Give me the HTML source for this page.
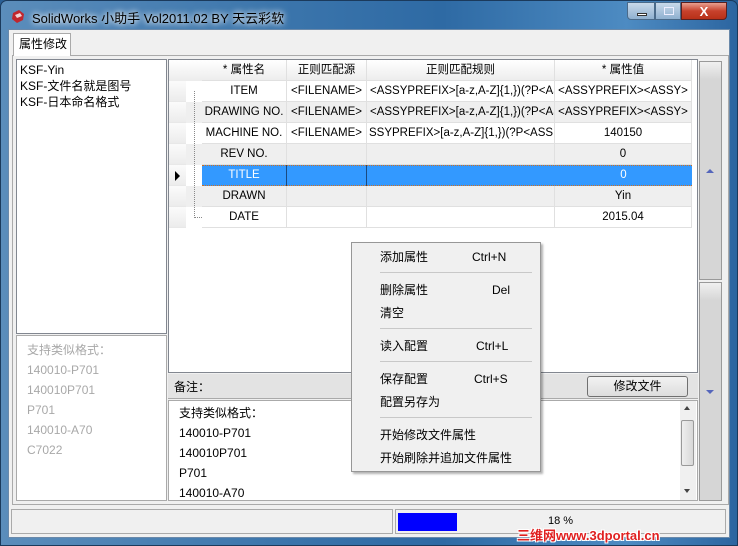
<!DOCTYPE html>
<html><head><meta charset="utf-8"><style>
*{margin:0;padding:0;box-sizing:border-box}
body{width:738px;height:546px;overflow:hidden;background:#2a5f95;font-family:"Liberation Sans","Noto Sans CJK SC",sans-serif;font-size:12px;color:#000;position:relative}
.a{position:absolute}
.win{left:0;top:0;width:738px;height:546px;border-radius:7px 7px 0 0;background:linear-gradient(90deg,#5b8dbb 0%,#3a74ab 40%,#2e6aa4 60%,#4d8bc2 85%,#2c65a0 100%);border:1px solid #1b3a5c}
.client{left:8px;top:29px;width:722px;height:509px;background:#f0f0f0;border:1px solid #6a89aa}
.t{white-space:nowrap}
.cell{position:absolute;height:21px;line-height:21px;text-align:center;white-space:nowrap;overflow:hidden;border-right:1px solid #e0e0e0;border-bottom:1px solid #e0e0e0;font-size:11.5px}
.rh{position:absolute;left:169px;width:17px;height:21px;background:linear-gradient(#fbfbfb,#ececec);border-bottom:1px solid #e8e8e8}
.menu div{position:absolute;left:28px;font-size:12px;white-space:nowrap;line-height:16px;height:16px}
.sep{position:absolute;left:22px;width:152px;height:1px !important;background:#c8c8c8}
</style></head><body>
<div class="a win"></div>
<svg class="a" style="left:10px;top:8px" width="16" height="16"><path d="M3 5 L9 2 L14 6 L13 12 L7 15 L2 11Z" fill="#c0262d"/><path d="M5 7 L10 5 L12 8 L7 10Z" fill="#fff" opacity=".8"/></svg>
<div class="a t" style="left:32px;top:8px;font-size:13px;color:#000;text-shadow:0 0 8px #fff,0 0 6px #fff">SolidWorks 小助手 Vol2011.02 BY 天云彩软</div>
<div class="a" style="left:627px;top:2px;width:28px;height:18px;border:1px solid #4a6a8a;border-radius:0 0 0 4px;background:linear-gradient(#c9d9ea,#8fb0d0)"><div class="a" style="left:9px;top:10px;width:10px;height:3px;background:#fff;border:1px solid #333"></div></div>
<div class="a" style="left:655px;top:2px;width:26px;height:18px;border:1px solid #4a6a8a;background:linear-gradient(#c9d9ea,#8fb0d0)"><div class="a" style="left:8px;top:4px;width:10px;height:8px;border:1px solid #eef;"></div></div>
<div class="a" style="left:681px;top:2px;width:46px;height:18px;border:1px solid #5a2020;border-radius:0 0 4px 0;background:linear-gradient(#e8a090,#c7412c 50%,#b83018);color:#fff;font-weight:bold;text-align:center;line-height:17px;font-size:13px">X</div>
<div class="a client"></div>
<div class="a" style="left:12px;top:55px;width:717px;height:450px;border:1px solid #aaa;background:#f0f0f0"></div>
<div class="a t" style="left:13px;top:33px;width:58px;height:23px;border:1px solid #aaa;border-bottom:none;background:#fff;line-height:21px;padding-left:5px">属性修改</div>
<div class="a" style="left:16px;top:59px;width:151px;height:275px;background:#fff;border:1px solid #828790"></div>
<div class="a t" style="left:20px;top:62px;line-height:16px">KSF-Yin<br>KSF-文件名就是图号<br>KSF-日本命名格式</div>
<div class="a" style="left:16px;top:335px;width:151px;height:166px;background:#fff;border:1px solid #aaa"></div>
<div class="a t" style="left:27px;top:340px;line-height:20px;color:#a8a8a8">支持类似格式：<br>140010-P701<br>140010P701<br>P701<br>140010-A70<br>C7022</div>
<div class="a" style="left:168px;top:59px;width:530px;height:314px;background:#fff;border:1px solid #828790"></div>
<div class="a" style="left:169px;top:60px;width:523px;height:21px;background:linear-gradient(#fff,#ececec)"></div>
<div class="cell" style="left:202px;top:60px;width:85px">* 属性名</div>
<div class="cell" style="left:287px;top:60px;width:80px">正则匹配源</div>
<div class="cell" style="left:367px;top:60px;width:188px">正则匹配规则</div>
<div class="cell" style="left:555px;top:60px;width:137px">* 属性值</div>
<div class="rh" style="top:81px"></div><div class="rh" style="top:102px"></div><div class="rh" style="top:123px"></div><div class="rh" style="top:144px"></div><div class="rh" style="top:165px"></div><div class="rh" style="top:186px"></div><div class="rh" style="top:207px"></div>
<div class="a" style="left:175px;top:171px;width:0;height:0;border-left:5px solid #000;border-top:5px solid transparent;border-bottom:5px solid transparent"></div>
<div class="a" style="left:186px;top:102px;width:16px;height:21px;background:#efefef"></div>
<div class="a" style="left:186px;top:144px;width:16px;height:21px;background:#efefef"></div>
<div class="a" style="left:186px;top:186px;width:16px;height:21px;background:#efefef"></div>
<div class="a" style="left:194px;top:91px;width:8px;height:127px;border-left:1px dotted #888;border-bottom:1px dotted #888"></div>
<div class="cell" style="left:202px;top:81px;width:85px">ITEM</div><div class="cell" style="left:287px;top:81px;width:80px">&lt;FILENAME&gt;</div><div class="cell" style="left:367px;top:81px;width:188px;text-align:left;padding-left:3px">&lt;ASSYPREFIX&gt;[a-z,A-Z]{1,})(?P&lt;AS</div><div class="cell" style="left:555px;top:81px;width:137px">&lt;ASSYPREFIX&gt;&lt;ASSY&gt;</div>
<div class="cell" style="left:202px;top:102px;width:85px;background:#efefef">DRAWING NO.</div><div class="cell" style="left:287px;top:102px;width:80px;background:#efefef">&lt;FILENAME&gt;</div><div class="cell" style="left:367px;top:102px;width:188px;text-align:left;padding-left:3px;background:#efefef">&lt;ASSYPREFIX&gt;[a-z,A-Z]{1,})(?P&lt;AS</div><div class="cell" style="left:555px;top:102px;width:137px;background:#efefef">&lt;ASSYPREFIX&gt;&lt;ASSY&gt;</div>
<div class="cell" style="left:202px;top:123px;width:85px">MACHINE NO.</div><div class="cell" style="left:287px;top:123px;width:80px">&lt;FILENAME&gt;</div><div class="cell" style="left:367px;top:123px;width:188px;text-align:left;padding-left:2px">SSYPREFIX&gt;[a-z,A-Z]{1,})(?P&lt;ASS</div><div class="cell" style="left:555px;top:123px;width:137px">140150</div>
<div class="cell" style="left:202px;top:144px;width:85px;background:#efefef">REV NO.</div><div class="cell" style="left:287px;top:144px;width:80px;background:#efefef"></div><div class="cell" style="left:367px;top:144px;width:188px;background:#efefef"></div><div class="cell" style="left:555px;top:144px;width:137px;background:#efefef">0</div>
<div class="a" style="left:202px;top:165px;width:490px;height:21px;background:#3399ff;border-top:1px dotted #d07020;border-bottom:1px dotted #d07020"></div>
<div class="cell" style="left:202px;top:165px;width:85px;color:#fff;border-right:1px solid #1a4a80;border-bottom:none">TITLE</div><div class="cell" style="left:287px;top:165px;width:80px;border-right:1px solid #1a4a80;border-bottom:none"></div><div class="cell" style="left:555px;top:165px;width:137px;color:#fff;border:none">0</div>
<div class="cell" style="left:202px;top:186px;width:85px;background:#efefef">DRAWN</div><div class="cell" style="left:287px;top:186px;width:80px;background:#efefef"></div><div class="cell" style="left:367px;top:186px;width:188px;background:#efefef"></div><div class="cell" style="left:555px;top:186px;width:137px;background:#efefef">Yin</div>
<div class="cell" style="left:202px;top:207px;width:85px">DATE</div><div class="cell" style="left:287px;top:207px;width:80px"></div><div class="cell" style="left:367px;top:207px;width:188px"></div><div class="cell" style="left:555px;top:207px;width:137px">2015.04</div>
<div class="a" style="left:699px;top:61px;width:23px;height:219px;border:1px solid #999;background:linear-gradient(#f0f0f0,#d6d6d6 8%,#d6d6d6)"></div>
<div class="a" style="left:706px;top:169px;border-bottom:4px solid #5566bb;border-left:4px solid transparent;border-right:4px solid transparent"></div>
<div class="a" style="left:699px;top:282px;width:23px;height:219px;border:1px solid #999;background:linear-gradient(#f0f0f0,#d6d6d6 8%,#d6d6d6)"></div>
<div class="a" style="left:706px;top:390px;border-top:4px solid #5566bb;border-left:4px solid transparent;border-right:4px solid transparent"></div>
<div class="a" style="left:168px;top:374px;width:530px;height:25px;background:#e3e3e3;border-bottom:1px solid #aaa"></div>
<div class="a t" style="left:174px;top:378px">备注：</div>
<div class="a" style="left:587px;top:376px;width:101px;height:21px;border:1px solid #707070;border-radius:3px;background:linear-gradient(#f2f2f2,#dddddd);text-align:center;line-height:19px">修改文件</div>
<div class="a" style="left:168px;top:400px;width:530px;height:101px;background:#fff;border:1px solid #aaa"></div>
<div class="a t" style="left:179px;top:403px;line-height:20px">支持类似格式：<br>140010-P701<br>140010P701<br>P701<br>140010-A70</div>
<div class="a" style="left:680px;top:401px;width:16px;height:99px;background:#f0f0f0"></div>
<div class="a" style="left:681px;top:420px;width:13px;height:46px;border:1px solid #999;border-radius:2px;background:linear-gradient(90deg,#eee,#d8d8d8)"></div>
<div class="a" style="left:684px;top:406px;border-bottom:4px solid #444;border-left:3px solid transparent;border-right:3px solid transparent"></div>
<div class="a" style="left:684px;top:489px;border-top:4px solid #444;border-left:3px solid transparent;border-right:3px solid transparent"></div>
<div class="a" style="left:11px;top:509px;width:382px;height:25px;border:1px solid #aaa;background:#f0f0f0"></div>
<div class="a" style="left:395px;top:509px;width:331px;height:25px;border:1px solid #aaa;background:#f0f0f0"></div>
<div class="a" style="left:398px;top:513px;width:59px;height:18px;background:#0000ff"></div>
<div class="a t" style="left:548px;top:515px;font-size:11px">18 %</div>
<div class="a t" style="left:517px;top:525px;font-size:13px;font-weight:bold;color:#e02020;text-shadow:1px 1px 0 #fff,-1px -1px 0 #fff,1px -1px 0 #fff,-1px 1px 0 #fff">三维网www.3dportal.cn</div>
<div class="a menu" style="left:351px;top:242px;width:190px;height:230px;background:#f0f0f0;border:1px solid #979797;box-shadow:2px 2px 2px rgba(0,0,0,.3)">
<div style="top:6px">添加属性</div><div style="top:6px;left:120px">Ctrl+N</div>
<div class="sep" style="top:29px"></div>
<div style="top:39px">删除属性</div><div style="top:39px;left:140px">Del</div>
<div style="top:62px">清空</div>
<div class="sep" style="top:85px"></div>
<div style="top:95px">读入配置</div><div style="top:95px;left:124px">Ctrl+L</div>
<div class="sep" style="top:118px"></div>
<div style="top:128px">保存配置</div><div style="top:128px;left:122px">Ctrl+S</div>
<div style="top:151px">配置另存为</div>
<div class="sep" style="top:174px"></div>
<div style="top:184px">开始修改文件属性</div>
<div style="top:207px">开始刷除并追加文件属性</div>
</div>
</body></html>
